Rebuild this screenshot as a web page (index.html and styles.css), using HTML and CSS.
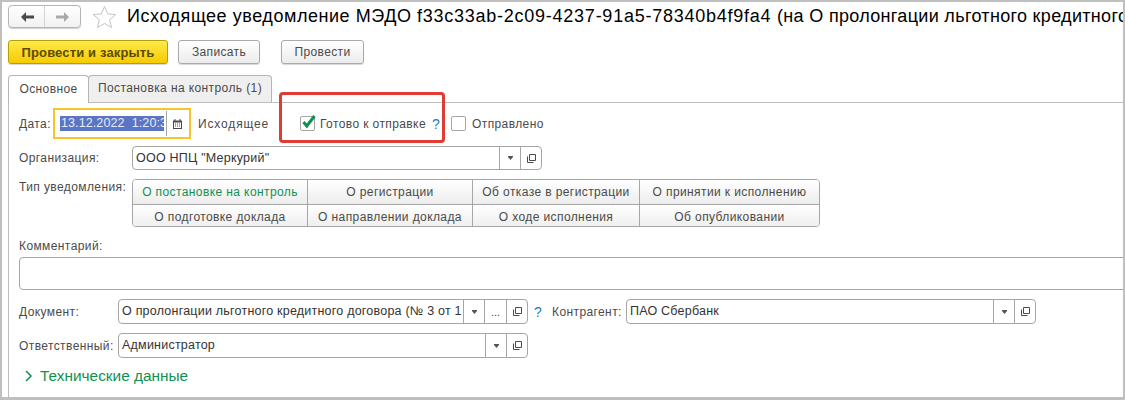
FILE: index.html
```html
<!DOCTYPE html>
<html lang="ru">
<head>
<meta charset="utf-8">
<title>Исходящее уведомление МЭДО</title>
<link rel="stylesheet" href="styles.css">
</head>
<body>
<div class="frame">
  <header class="head">
    <div class="nav">
      <button class="nav-btn"><svg width="16" height="12" viewBox="0 0 16 12"><path d="M7 1 2 6l5 5V7.6h8V4.4H7z" fill="#4a4a4a"/></svg></button>
      <button class="nav-btn"><svg width="16" height="12" viewBox="0 0 16 12"><path d="M9 1l5 5-5 5V7.6H1V4.4h8z" fill="#a8a8a8"/></svg></button>
    </div>
    <svg class="star" width="25" height="24" viewBox="0 0 25 24"><path d="M12.5 1.5l3.2 7.4 8 .7-6.1 5.2 1.9 7.8-7-4.2-7 4.2 1.9-7.8L1.3 9.6l8-.7z" fill="#fff" stroke="#c4c4c4" stroke-width="1"/></svg>
    <h1 class="title"><span class="t1">Исходящее уведомление МЭДО </span><span class="t2">f33c33ab-2c09-4237-91a5-78340b4f9fa4 </span><span class="t3">(на О пролонгации льготного кредитного</span></h1>
  </header>
  <div class="commands">
    <button class="btn btn-main">Провести и закрыть</button>
    <button class="btn btn-write">Записать</button>
    <button class="btn btn-post">Провести</button>
  </div>
  <div class="tabs">
    <div class="tab tab-on">Основное</div>
    <div class="tab tab-off">Постановка на контроль (1)</div>
  </div>
  <main class="panel">
    <div class="row row-date">
      <span class="lbl lbl-date">Дата:</span>
      <div class="date-focus">
        <div class="date-input"><span class="date-sel">13.12.2022&nbsp;&nbsp;1:20:3</span></div>
        <span class="date-cal"><svg width="9" height="10" viewBox="0 0 9 10"><path d="M0 1.500h1.500V0h1v1.500h4V0h1v1.500H9V10H0z" fill="#4a4a4a"/><path d="M1 3.500h7V9H1z" fill="#fff"/><path d="M2 4.500h1v1H2zM4 4.500h1v1H4zM6 4.500h1v1H6zM2 6.500h1v1H2zM4 6.500h1v1H4zM6 6.500h1v1H6z" fill="#4a4a4a"/></svg></span>
      </div>
      <span class="lbl lbl-out">Исходящее</span>
      <span class="check check-ready"><svg width="17" height="15" viewBox="0 0 17 15"><path d="M3.500 7l3.300 4L14.500 1" fill="none" stroke="#0f9150" stroke-width="3"/></svg></span>
      <span class="lbl lbl-ready">Готово к отправке</span>
      <span class="help help-ready">?</span>
      <span class="check check-sent"></span>
      <span class="lbl lbl-sent">Отправлено</span>
    </div>
    <div class="row row-org">
      <span class="lbl lbl-org">Организация:</span>
      <div class="field field-org">
        <span class="field-text">ООО НПЦ "Меркурий"</span>
        <span class="fbtn"><svg width="5" height="4" viewBox="0 0 5 4"><path d="M0 0h5v1L2.500 4 0 1z" fill="#555"/></svg></span>
        <span class="fbtn"><svg width="9" height="9" viewBox="0 0 9 9"><path d="M2.500.5h6v6h-6zM.5 2.500v6h6" fill="none" stroke="#4a4a4a"/></svg></span>
      </div>
    </div>
    <div class="row row-type">
      <span class="lbl lbl-org lbl-type">Тип уведомления:</span>
      <div class="choice">
        <div class="opt opt1 opt-on">О постановке на контроль</div>
        <div class="opt opt2">О регистрации</div>
        <div class="opt opt3">Об отказе в регистрации</div>
        <div class="opt opt4">О принятии к исполнению</div>
        <div class="opt opt1 opt-b">О подготовке доклада</div>
        <div class="opt opt2 opt-b">О направлении доклада</div>
        <div class="opt opt3 opt-b">О ходе исполнения</div>
        <div class="opt opt4 opt-b">Об опубликовании</div>
      </div>
    </div>
    <div class="lbl lbl-comment">Комментарий:</div>
    <div class="comment"></div>
    <div class="row row-doc">
      <span class="lbl lbl-doc">Документ:</span>
      <div class="field field-doc">
        <span class="field-text">О пролонгации льготного кредитного договора (№ 3 от 1</span>
        <span class="fbtn"><svg width="5" height="4" viewBox="0 0 5 4"><path d="M0 0h5v1L2.500 4 0 1z" fill="#555"/></svg></span>
        <span class="fbtn fbtn-dots">...</span>
        <span class="fbtn"><svg width="9" height="9" viewBox="0 0 9 9"><path d="M2.500.5h6v6h-6zM.5 2.500v6h6" fill="none" stroke="#4a4a4a"/></svg></span>
      </div>
      <span class="help help-doc">?</span>
      <span class="lbl lbl-agent">Контрагент:</span>
      <div class="field field-agent">
        <span class="field-text">ПАО Сбербанк</span>
        <span class="fbtn"><svg width="5" height="4" viewBox="0 0 5 4"><path d="M0 0h5v1L2.500 4 0 1z" fill="#555"/></svg></span>
        <span class="fbtn"><svg width="9" height="9" viewBox="0 0 9 9"><path d="M2.500.5h6v6h-6zM.5 2.500v6h6" fill="none" stroke="#4a4a4a"/></svg></span>
      </div>
    </div>
    <div class="row row-resp">
      <span class="lbl lbl-doc">Ответственный:</span>
      <div class="field field-doc">
        <span class="field-text">Администратор</span>
        <span class="fbtn"><svg width="5" height="4" viewBox="0 0 5 4"><path d="M0 0h5v1L2.500 4 0 1z" fill="#555"/></svg></span>
        <span class="fbtn"><svg width="9" height="9" viewBox="0 0 9 9"><path d="M2.500.5h6v6h-6zM.5 2.500v6h6" fill="none" stroke="#4a4a4a"/></svg></span>
      </div>
    </div>
    <div class="expand">
      <svg width="8" height="12" viewBox="0 0 8 12"><path d="M1 1l5 5-5 5" fill="none" stroke="#0f9150" stroke-width="1.500"/></svg>
      <span>Технические данные</span>
    </div>
  </main>
  <div class="red-box"></div>
</div>
</body>
</html>
```
FILE: styles.css
```css
* { box-sizing: border-box; }
html, body { margin: 0; padding: 0; background: #fff; }
body { font-family: "Liberation Sans", Arial, sans-serif; font-size: 12px; color: #4a4a4a; }
.frame { position: relative; width: 1125px; height: 400px; overflow: hidden; background: #fff;
  border: 2px solid #bfbfbf; border-bottom-width: 3px; padding: 3px 0 0 6px; }
.head { display: flex; align-items: center; height: 23px; white-space: nowrap; }
.nav { display: flex; flex: none; width: 73px; height: 23px; border: 1px solid #b5b5b5; border-radius: 4px;
  background: linear-gradient(#fff, #f1f1f1); box-shadow: 0 1px 1px #d0d0d0; }
.nav-btn { flex: 1; border: 0; padding: 0; background: none; display: flex; align-items: center; justify-content: center; }
.nav-btn + .nav-btn { border-left: 1px solid #d4d4d4; }
.star { flex: none; margin-left: 11px; }
.title { flex: none; margin: 0 0 0 10px; font-size: 18px; line-height: 23px; font-weight: 400; color: #000; }
.t1 { letter-spacing: .55px; }
.t2 { letter-spacing: .75px; }
.t3 { letter-spacing: .32px; }
.commands { display: flex; margin-top: 12px; height: 24px; }
.btn { height: 24px; padding: 0; font: 12px "Liberation Sans", Arial, sans-serif; letter-spacing: .35px; color: #4a4a4a; border: 1px solid #aaa;
  border-radius: 3px; background: linear-gradient(#fff, #ececec); box-shadow: 0 1px 1px #d8d8d8; }
.btn-main { width: 160px; font-size: 13px; letter-spacing: .15px; font-weight: 700; color: #5a4b00; border-color: #b5a000; background: linear-gradient(#ffe94a, #f6cb00); }
.btn-write { width: 82px; margin-left: 10px; }
.btn-post { width: 83px; margin-left: 21px; }
.tabs { display: flex; margin-top: 11px; height: 27px; }
.tab { height: 28px; display: flex; align-items: center; justify-content: center; border: 1px solid #b5b5b5; border-bottom: 0; border-radius: 4px 4px 0 0; letter-spacing: .4px; padding-bottom: 2px; }
.tab-on { width: 81px; background: #fff; position: relative; z-index: 1; }
.tab-off { width: 184px; margin-left: -1px; background: #efefef; height: 27px; }
.panel { height: 296px; border-left: 1px solid #bdbdbd; border-top: 1px solid #bdbdbd; padding-left: 10px; }
.row { display: flex; align-items: center; }
.lbl { flex: none; letter-spacing: .4px; white-space: nowrap; }
.row-date { margin-top: 5px; height: 31px; }
.lbl-date { width: 34px; }
.date-focus { display: flex; align-items: center; flex: none; width: 138px; height: 31px; border: 2px solid #f6c42b; padding: 0 0 0 5px; }
.date-input { flex: none; width: 104px; height: 15px; overflow: hidden; white-space: nowrap; background: #5a75c4; }
.date-sel { font-size: 12.500px; line-height: 15px; color: #e8ecf8; display: block; letter-spacing: .1px; padding-left: 1px; }
.date-cal { display: flex; align-items: center; justify-content: center; flex: none; width: 21px; height: 25px; margin-left: 2px; border-left: 1px solid #a6a6a6; }
.lbl-out { margin-left: 7px; width: 102px; letter-spacing: .85px; }
.check { flex: none; display: block; width: 15px; height: 15px; border: 1px solid #a6a6a6; border-radius: 2px; background: #fff; }
.check svg { display: block; margin: -2px 0 0 -1px; }
.lbl-ready { margin-left: 5px; width: 112px; }
.help { flex: none; color: #1a7fc4; font-size: 14px; }
.help-ready { width: 19px; }
.lbl-sent { margin-left: 6px; }
.row-org { margin-top: 7px; height: 24px; }
.lbl-org { width: 113px; }
.field { display: flex; flex: none; height: 24px; border: 1px solid #a6a6a6; border-radius: 4px; background: #fff; color: #333; }
.field-text { flex: 1; min-width: 0; overflow: hidden; white-space: nowrap; line-height: 22px; padding-left: 3px; font-size: 12.500px; letter-spacing: .22px; }
.fbtn { flex: none; display: flex; align-items: center; justify-content: center; width: 21px; border-left: 1px solid #a6a6a6; }
.fbtn-dots { width: 22px; font-size: 11px; color: #4a4a4a; }
.field-org { width: 410px; }
.row-type { margin-top: 9px; align-items: flex-start; }
.lbl-type { margin-top: 1px; }
.choice { display: grid; grid-template-columns: 174px 165px 167px 180px; grid-auto-rows: 24px; width: 688px; border: 1px solid #a6a6a6; border-radius: 4px; overflow: hidden; height: 48px; }
.opt { display: flex; align-items: center; justify-content: center; white-space: nowrap; letter-spacing: .4px; background: linear-gradient(#fff, #ededed); border-left: 1px solid #a6a6a6; }
.opt1 { border-left: 0; }
.opt-b { border-top: 1px solid #a6a6a6; }
.opt-on { color: #0f9150; }
.lbl-comment { margin-top: 12px; height: 14px; line-height: 14px; }
.comment { margin-top: 4px; height: 33px; width: 1120px; border: 1px solid #a6a6a6; border-radius: 4px; }
.row-doc { margin-top: 9px; height: 25px; }
.lbl-doc { width: 99px; }
.field-doc { width: 410px; height: 25px; }
.help-doc { margin-left: 6px; width: 18px; }
.lbl-agent { width: 74px; }
.field-agent { width: 410px; height: 25px; }
.row-resp { margin-top: 9px; height: 25px; }
.expand { display: flex; align-items: center; margin: 9px 0 0 6px; height: 18px; gap: 7px; color: #0f9150; font-size: 15.400px; }
.red-box { position: absolute; left: 277px; top: 90px; width: 166px; height: 51px; border: 3px solid #e03c31; border-radius: 4px; }
```
